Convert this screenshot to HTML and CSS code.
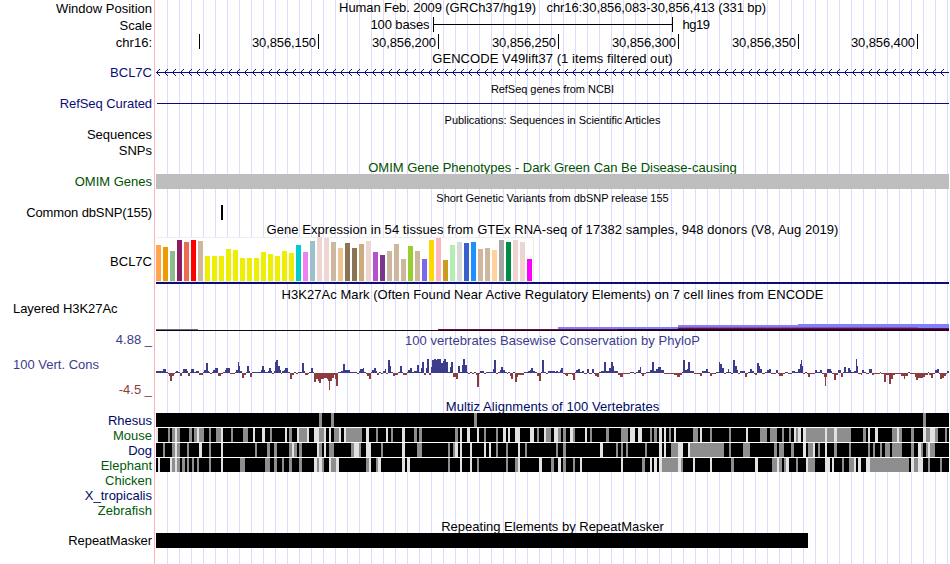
FILE: index.html
```html
<!DOCTYPE html>
<html lang="en">
<head>
<meta charset="utf-8">
<title>Genome Browser chr16:30,856,083-30,856,413</title>
<link rel="stylesheet" href="styles.css">
</head>
<body>
<div class="browser">
  <div class="labels">
    <div class="label window">Window Position</div>
    <div class="label scale">Scale</div>
    <div class="label chrom">chr16:</div>
    <div class="label gencode navy">BCL7C</div>
    <div class="label refseq navy">RefSeq Curated</div>
    <div class="label sequences">Sequences</div>
    <div class="label snps">SNPs</div>
    <div class="label omim green">OMIM Genes</div>
    <div class="label dbsnp tight">Common dbSNP(155)</div>
    <div class="label gtex">BCL7C</div>
    <div class="label h3k27 left">Layered H3K27Ac</div>
    <div class="label cons-max slate">4.88 _</div>
    <div class="label cons left slate">100 Vert. Cons</div>
    <div class="label cons-min brick">-4.5 _</div>
    <div class="label rhesus navy2">Rhesus</div>
    <div class="label species green2">Mouse</div>
    <div class="label species navy2">Dog</div>
    <div class="label species green2">Elephant</div>
    <div class="label species green2">Chicken</div>
    <div class="label species navy2">X_tropicalis</div>
    <div class="label species green2">Zebrafish</div>
    <div class="label repeat">RepeatMasker</div>
  </div>
  <div class="tracks">
    <div class="title t-window">Human Feb. 2009 (GRCh37/hg19) &nbsp; chr16:30,856,083-30,856,413 (331 bp)</div>
    <svg class="track" viewBox="156 14 793 37" height="37">
      <path class="black" d="M433 17h1v7h238v-7h1v15h-1v-7h-238v7h-1z"/>
      <text x="370.5" y="29" textLength="59">100 bases</text>
      <text x="682.5" y="29" textLength="27.5">hg19</text>
      <g id="ruler"></g>
    </svg>
    <div class="title t-gencode">GENCODE V49lift37 (1 items filtered out)</div>
    <svg class="track" viewBox="156 65 793 17" height="17">
      <rect class="gene" x="156" y="72" width="793" height="1"/>
      <path id="arrows" class="gene"/>
    </svg>
    <div class="title small t-refseq">RefSeq genes from NCBI</div>
    <svg class="track" viewBox="156 96 793 17" height="17">
      <rect class="gene" x="157" y="103" width="792" height="1"/>
    </svg>
    <div class="title small t-pubs">Publications: Sequences in Scientific Articles</div>
    <div class="title green t-omim">OMIM Gene Phenotypes - Dark Green Can Be Disease-causing</div>
    <svg class="track" viewBox="156 174 793 16" height="16">
      <rect fill="#bebebe" x="156" y="174" width="793" height="15"/>
    </svg>
    <div class="title small t-dbsnp">Short Genetic Variants from dbSNP release 155</div>
    <svg class="track" viewBox="156 204 793 18" height="18">
      <rect class="black" x="221" y="205" width="2" height="15"/>
    </svg>
    <div class="title t-gtex">Gene Expression in 54 tissues from GTEx RNA-seq of 17382 samples, 948 donors (V8, Aug 2019)</div>
    <svg class="track" viewBox="156 236 793 51" height="51">
      <rect fill="#eeeeee" x="156" y="237" width="378" height="45"/>
      <rect fill="#ffffff" x="156" y="238" width="377" height="43"/>
      <g id="gtex"></g>
      <rect class="gene" x="156" y="282" width="793" height="2"/>
    </svg>
    <div class="title t-h3k27">H3K27Ac Mark (Often Found Near Active Regulatory Elements) on 7 cell lines from ENCODE</div>
    <svg class="track" viewBox="156 301 793 32" height="32">
      <path fill="#8080ff" d="M558 327h120v-2h120v-1h151v5h-391z"/>
      <path fill="#8d4f9e" d="M678 327h240v1h-240z"/>
      <path fill="#6a1040" d="M438 329h240v-1h271v2h-511z"/>
      <path fill="#2c0030" d="M618 329h331v1h-331z"/>
      <path fill="#6b6b7a" d="M156 329h42v1h-42z"/>
      <path fill="#180018" d="M156 330h793v1h-793z"/>
    </svg>
    <div class="title slate t-cons">100 vertebrates Basewise Conservation by PhyloP</div>
    <svg class="track" viewBox="156 347 793 52" height="52">
      <path id="cons-up" fill="#3c3c8c"/>
      <path id="cons-down" fill="#8c3c3c"/>
    </svg>
    <div class="title navy2 t-multiz">Multiz Alignments of 100 Vertebrates</div>
    <svg class="track" viewBox="156 413 793 106" height="106">
      <rect fill="#ffffff" x="156" y="413" width="793" height="59"/>
      <g id="multiz"></g>
    </svg>
    <div class="title t-repeat">Repeating Elements by RepeatMasker</div>
    <svg class="track" viewBox="156 533 793 31" height="31">
      <rect class="black" x="156" y="533" width="652" height="15"/>
    </svg>
  </div>
</div>
<script src="tracks.js"></script>
</body>
</html>
```
FILE: styles.css
```css
body {
  margin: 0;
  background: #fff;
  color: #000;
  font-family: "Liberation Sans", Arial, sans-serif;
  font-size: 13px;
  overflow: hidden;
}
.browser { display: flex; width: 949px; height: 564px; }

.labels { display: flex; flex-direction: column; flex: none; width: 154px; }
.label {
  height: 14px;
  padding-right: 2px;
  line-height: 16px;
  text-align: right;
  white-space: nowrap;
}
.left { padding-left: 13px; text-align: left; }
.tight { letter-spacing: -0.12px; }
.window { margin-top: 1px; }
.scale, .chrom { margin-top: 3px; }
.gencode { margin-top: 16px; }
.refseq, .sequences, .omim, .dbsnp { margin-top: 17px; }
.refseq, .h3k27, .repeat { letter-spacing: -0.07px; }
.snps { margin-top: 2px; }
.gtex { margin-top: 35px; }
.h3k27 { margin-top: 33px; }
.cons-max { margin-top: 17px; }
.cons, .cons-min { margin-top: 11px; }
.rhesus { margin-top: 17px; }
.species { margin-top: 1px; }
.repeat { margin-top: 16px; }

.navy { color: #0c0c78; }
.navy2 { color: #000a64; }
.green { color: #005000; }
.green2 { color: #005a0a; }
.slate { color: #3c3c8c; }
.brick { color: #8c3c3c; }

.tracks {
  flex: none;
  width: 793px;
  padding-left: 1px;
  border-left: 1px solid #ffb4b4;
  background: repeating-linear-gradient(to right, transparent 0 11px, #dcdcff 11px 12px) content-box;
}
.title { height: 14px; line-height: 16px; text-align: center; white-space: nowrap; }
.small { font-size: 11px; line-height: 14px; letter-spacing: -0.04px; }
.t-window { letter-spacing: -0.09px; }
.t-gencode, .t-gtex, .t-h3k27 { letter-spacing: 0.05px; }
.t-cons, .t-multiz { letter-spacing: 0.07px; }
.t-omim { margin-top: 33px; }
.t-dbsnp { line-height: 16px; letter-spacing: -0.02px; }

.track { display: block; width: 793px; shape-rendering: crispEdges; }
.black { fill: #000; }
.gene { fill: #0c0c78; }
```
FILE: tracks.js
```js
const NS = "http://www.w3.org/2000/svg";

function add(parent, name, attrs, text) {
  const el = document.createElementNS(NS, name);
  for (const key in attrs) el.setAttribute(key, attrs[key]);
  if (text) el.textContent = text;
  parent.appendChild(el);
}
const byId = (id) => document.getElementById(id);

// Position ruler
const ticks = [[199, ""], [318, "30,856,150"], [438, "30,856,200"], [558, "30,856,250"],
  [678, "30,856,300"], [798, "30,856,350"], [917, "30,856,400"]];
for (const [x, name] of ticks) {
  add(byId("ruler"), "rect", { x, y: 34, width: 1, height: 15 });
  if (name) add(byId("ruler"), "text", { x: x - 66, y: 47, textLength: 64 }, name);
}

// Strand arrows, one pixel per step of each barb
let arrows = "";
for (let x = 156; x < 948; x += 8) {
  for (let s = 1; s <= 3; s++) arrows += `M${x + s} ${72 - s}h1v1h-1zM${x + s} ${72 + s}h1v1h-1z`;
}
byId("arrows").setAttribute("d", arrows);

// GTEx expression: height and colour for each tissue
const tops = [60,66,78,45,51,45,48,93,93,93,72,75,99,99,99,81,87,93,78,84,60,81,48,36,39,51,69,54,
  69,57,48,81,90,78,57,102,63,78,102,45,39,105,60,51,54,51,72,69,75,45,51,45,51,102];
const colors = ("FFA54F EE9A00 8FBC8F 8B1C62 EE6A50 FF0000 CDB79E " + "EEEE00 ".repeat(13) +
  "00CDCD EE82EE 9AC0CD EED5D2 EED5D2 CDB79E EEC591 8B7355 8B7355 CDAA7D EED5D2 B452CD 7A378B " +
  "CDB79E CDB79E CDB79E 9ACD32 CDB79E 7A67EE FFD700 FFB6C1 CD9B1D B4EEB4 D9D9D9 3A5FCD 1E90FF " +
  "CDB79E CDB79E FFD39B A6A6A6 008B45 EED5D2 EED5D2 FF00FF").split(" ");
tops.forEach((t, i) => add(byId("gtex"), "rect",
  { x: 156 + i * 7, y: 225 + t / 3, width: 5, height: 56 - t / 3, fill: "#" + colors[i] }));

// PhyloP scores as start:height steps
const scores = `156:2 163:4 166:1 168:-1 169:-3 170:-8 172:-3 174:-1 175:1 176:2 178:1 180:-3 182:1 183:4 187:2
188:-3 190:1 191:4 194:0 196:2 199:-2 203:0 204:3 206:10 208:2 209:0 210:-1 212:1 213:3 215:5 218:-3 221:-1
223:1 225:3 226:5 230:-1 235:1 236:3 238:11 239:7 240:2 242:-5 244:-2 246:1 247:7 249:2 250:-4 252:1 261:3
262:7 264:3 265:1 268:2 269:5 271:2 272:-1 274:2 275:11 276:13 278:7 280:3 281:-1 282:2 284:3 285:5 288:1
290:-6 292:-2 294:1 296:-1 298:1 302:10 304:2 305:-2 308:-1 309:1 311:5 313:1 314:-9 316:-6 318:-8 319:-10
321:-6 324:-5 327:-6 328:-8 329:-17 330:-8 332:-5 334:-2 335:-6 336:-13 338:1 340:0 341:2 343:9 345:3
350:1 357:-1 359:2 360:4 363:5 364:1 366:-1 367:-3 369:-6 371:0 372:3 374:5 376:2 377:-2 379:1 381:-1 383:2
385:4 386:-1 388:13 390:7 391:1 393:-3 395:-2 398:1 400:7 402:1 403:-2 407:1 408:3 410:5 412:1 414:2 417:8
419:1 421:5 422:11 424:-2 426:5 427:14 429:-2 431:6 432:13 434:14 436:13 437:14 441:10 443:12 444:14 446:11
448:1 450:6 451:11 453:-4 456:-6 458:7 460:1 462:8 463:14 465:8 467:1 468:-1 470:0 472:-1 474:1 476:-2
477:-14 479:-1 480:2 484:-1 486:1 493:4 494:13 496:-1 498:1 500:3 501:6 503:3 505:1 507:-1 508:1 510:-3
511:-6 513:1 515:-9 517:-4 518:-2 524:1 528:2 530:3 531:5 533:2 535:1 537:-3 539:-8 541:1 542:13 544:1 546:-1
548:2 555:1 556:2 558:1 560:3 561:5 563:-1 565:-2 566:-3 568:-1 572:-2 573:-7 575:1 576:3 578:4 580:1 582:2
584:-1 587:4 589:-1 592:4 594:-1 595:-3 597:-4 599:1 601:2 604:11 606:2 609:5 611:11 613:7 614:2 618:-2
620:-4 623:-1 630:1 634:-1 636:1 638:3 640:6 641:-1 642:-3 644:-1 646:1 650:3 652:11 654:2 656:4 658:6 661:3
664:-1 674:-2 677:-4 680:-2 682:1 683:13 685:3 687:4 688:11 690:2 694:-1 700:-3 702:2 706:4 708:1 710:-3
712:-1 716:1 719:11 720:9 722:5 724:-1 726:1 728:4 729:1 731:-1 733:13 735:7 737:3 738:-1 740:2 742:2 745:-4
747:-1 748:1 750:4 752:2 754:-1 755:-2 757:10 759:7 760:4 762:-1 765:1 767:3 769:4 771:-1 776:3 778:-1
779:-3 783:-1 785:1 788:-1 792:2 795:1 798:4 800:9 801:13 802:7 803:-1 805:1 807:-1 808:-4 810:-1 812:-1
815:3 817:1 820:3 822:-1 824:-4 825:-13 826:-4 827:4 831:2 832:-1 834:-7 836:-2 838:3 841:-4 843:1 844:6
846:1 848:5 850:3 851:1 854:2 856:14 857:7 858:-1 861:-2 862:3 864:1 866:-1 869:4 872:-2 874:-1 880:1 881:-1
884:-9 886:-2 889:-11 891:-6 893:-2 895:-1 901:-3 904:-6 905:-3 908:1 910:-1 915:-4 916:-7 918:-5 923:-4
925:-2 928:1 929:-2 931:-5 933:-1 935:3 937:4 939:-1 940:-6 942:-5 944:-3 946:-1 947:2 949:0`
  .split(/\s+/).map((s) => s.split(":").map(Number));
let up = "", down = "";
for (let i = 0; i < scores.length - 1; i++) {
  const [x, h] = scores[i], w = scores[i + 1][0] - x;
  if (h >= 0) up += `M${x} 373h${w}v${-Math.max(h, 1)}h${-w}z`;
  else down += `M${x} 373h${w}v${-h}h${-w}z`;
}
byId("cons-up").setAttribute("d", up);
byId("cons-down").setAttribute("d", down);

// Alignment rows; g marks weak columns and l marks gaps
const rows = [
`g319-322 g331-334 g474-477 g923-926`,
`l156-158 g168-170 g172-175 l175-177 g177-180 g189-192 g194-197 l197-199 g199-204 g209-211 g216-221 l221-223
g231-233 g243-248 l253-255 l262-265 g270-272 l285-287 g289-292 l297-299 g299-307 l307-309 l314-319 g319-324
l324-326 l329-331 g334-339 l339-341 l344-346 g346-362 l366-369 g376-378 l386-388 g391-393 l402-405 g414-417
g419-422 g455-458 l460-462 l467-470 l477-479 g484-486 g496-498 l503-506 l508-510 l515-520 l530-534 g537-539
l544-546 g546-551 l554-558 g558-561 g563-566 l570-573 g573-575 l585-587 g590-592 g606-609 g621-628 l630-635
l638-642 g650-652 g654-657 l659-662 l664-666 g669-671 l674-676 g693-698 l700-702 g710-712 g729-731 l746-748
g760-767 g770-777 g782-784 g789-791 l794-796 g796-798 l798-801 l803-806 g806-825 l825-827 g827-834 l834-837
g837-851 g863-866 l868-870 l875-878 g892-897 l897-899 g899-902 g911-914 l923-926 g926-930 l930-935 g935-938
g945-947`,
`g163-165 g172-175 l175-177 g177-180 g187-189 l199-202 g209-211 l221-223 g255-257 g267-270 g274-277 g289-292
l292-294 g294-297 g299-302 l317-319 g319-322 l324-326 g329-334 g351-354 l354-359 g359-361 l366-371 g381-383
l402-405 g417-422 g448-450 g453-455 l455-458 l460-462 l470-472 l484-486 l489-491 g496-498 g506-508 l518-520
g525-527 g556-558 g563-566 l600-603 g616-618 g621-623 g626-628 g645-647 l659-662 l664-666 g671-678 l678-683
l688-690 g690-724 g729-731 g743-750 g774-777 g779-784 g791-794 l803-806 g808-813 l813-815 g818-820 l825-827
g834-837 g849-851 g868-870 g873-875 g880-882 g885-890 g892-902 g911-914 l918-921 g921-923 g926-928 l928-930
g930-935`,
`l158-160 l170-172 g172-175 l175-177 g177-180 g182-185 g187-189 g192-194 g197-199 g209-211 l221-223 g240-245
g265-270 g274-277 g282-284 g289-292 g299-302 l314-317 g317-319 l319-322 g322-324 l329-331 g331-336 l336-339
g366-369 l369-371 g376-378 l378-381 l402-405 l407-410 g448-450 l460-462 l470-472 g477-479 g506-508 g515-518
l518-520 l539-542 g551-554 l558-561 g563-566 g573-575 l580-582 l621-623 g642-645 l650-652 l654-657 l659-662
g662-678 l678-681 g681-683 l693-695 l710-712 g731-734 l755-758 g772-777 l777-779 g779-782 g784-786 l786-789
g796-798 l806-808 g808-815 l825-830 l832-834 g842-844 g849-854 l854-856 l858-861 l866-870 g870-909 l911-914
g914-918 l918-923 g928-930 g940-942`];
rows.forEach((row, i) => {
  const y = 413 + i * 15, g = byId("multiz");
  add(g, "rect", { x: 156, y, width: 793, height: 14 });
  for (const item of row.split(/\s+/)) {
    const [a, b] = item.slice(1).split("-").map(Number);
    add(g, "rect", { x: a, y, width: b - a, height: 14, fill: item[0] === "g" ? "#8e8e8e" : "#e2e2e2" });
  }
});
```
